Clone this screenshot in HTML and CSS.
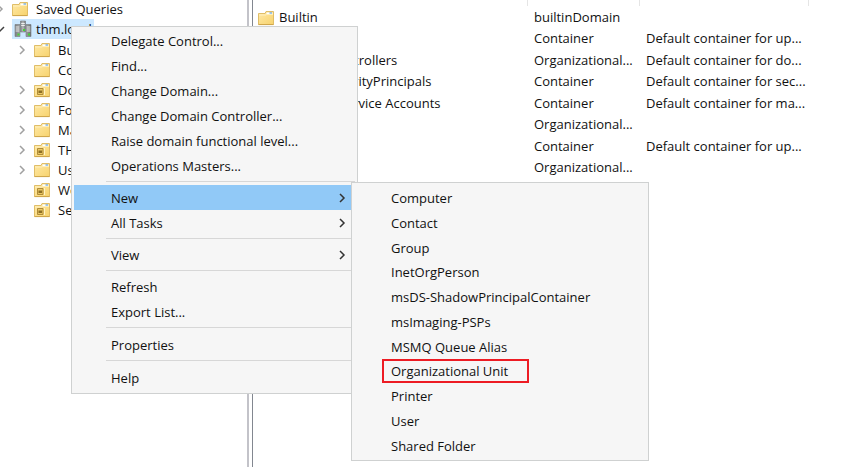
FILE: index.html
```html
<!DOCTYPE html>
<html lang="en">
<head>
  <meta charset="UTF-8">
  <meta name="viewport" content="width=device-width, initial-scale=1.0">

  <title>Active Directory Users and Computers</title>
  <link rel="stylesheet" href="styles.css">
</head>
<body>
  <!-- Shared icons -->
  <svg class="sprite" aria-hidden="true">
    <defs>
      <linearGradient id="gold" x1="0" y1="0" x2="1" y2="1">
        <stop offset="0" stop-color="#ffe9a6"/>
        <stop offset="1" stop-color="#f7d36e"/>
      </linearGradient>
      <linearGradient id="steel" x1="0" y1="0" x2="1" y2="0">
        <stop offset="0" stop-color="#7b7f82"/>
        <stop offset="0.5" stop-color="#b9bcbd"/>
        <stop offset="1" stop-color="#6b6f72"/>
      </linearGradient>
    </defs>
    <symbol id="folder" viewBox="0 0 16 16">
      <path d="M0.5 14.5V3.500h6.500l1-2h7.500v13z" fill="url(#gold)" stroke="#dcb85c" stroke-width="0.9"/>
      <path d="M8.500 2.500h6v1.500h-6z" fill="#fff"/>
      <path d="M11.500 3h2.500" stroke="#3d8fe0" stroke-width="1"/>
      <path d="M1 5h6.500l1-0.500H15" fill="none" stroke="#fff3c8" stroke-width="0.8"/>
      <path d="M0.500 14.600h15" stroke="#cda146" stroke-width="0.9"/>
    </symbol>
    <symbol id="unit" viewBox="0 0 16 16">
      <use href="#folder"/>
      <path d="M3.500 6.500h5.500v6h-5.500z" fill="#e9c765" stroke="#b08c38" stroke-width="1"/>
      <path d="M4.500 8.500h3.500v2.500h-3.500z" fill="#8d6f25"/>
      <path d="M10.500 6v7" stroke="#fff3c4" stroke-width="1"/>
    </symbol>
    <symbol id="domain" viewBox="0 0 18 18">
      <path d="M6.500 1h5v11h-5z" fill="url(#steel)" stroke="#75797c" stroke-width="0.6"/>
      <path d="M1 4.500h5v12H1zM12 4.500h5v12h-5z" fill="url(#steel)" stroke="#75797c" stroke-width="0.6"/>
      <path d="M7.200 3.500h3.600M7.200 5.500h3.600M1.700 7h3.600M1.700 9h3.600M1.700 11h3.600M12.700 7h3.600M12.700 9h3.600M12.700 11h3.600" stroke="#f4f5f5" stroke-width="0.9"/>
      <path d="M9 9h2v2H9zM3.500 13.500h2v2h-2zM14 13.500h2v2h-2z" fill="#42d832"/>
    </symbol>
    <symbol id="chevron" viewBox="0 0 8 10">
      <path d="M2 1l4 4-4 4" fill="none" stroke="currentColor" stroke-width="1.500"/>
    </symbol>
  </svg>

  <main class="console">
    <nav class="tree" aria-label="Console tree">
      <ul class="root">
        <li class="node"><svg class="arrow"><use href="#chevron"/></svg><svg class="icon"><use href="#folder"/></svg><span>Saved Queries</span></li>
        <li>
          <div class="node"><svg class="arrow open"><use href="#chevron"/></svg><span class="selected"><svg class="icon-domain"><use href="#domain"/></svg>thm.local</span></div>
          <ul class="children">
            <li class="node"><svg class="arrow"><use href="#chevron"/></svg><svg class="icon"><use href="#folder"/></svg><span>Builtin</span></li>
            <li class="node leaf"><svg class="icon"><use href="#folder"/></svg><span>Computers</span></li>
            <li class="node"><svg class="arrow"><use href="#chevron"/></svg><svg class="icon"><use href="#unit"/></svg><span>Domain Controllers</span></li>
            <li class="node"><svg class="arrow"><use href="#chevron"/></svg><svg class="icon"><use href="#folder"/></svg><span>ForeignSecurityPrincipals</span></li>
            <li class="node"><svg class="arrow"><use href="#chevron"/></svg><svg class="icon"><use href="#folder"/></svg><span>Managed Service Accounts</span></li>
            <li class="node"><svg class="arrow"><use href="#chevron"/></svg><svg class="icon"><use href="#unit"/></svg><span>THM</span></li>
            <li class="node"><svg class="arrow"><use href="#chevron"/></svg><svg class="icon"><use href="#folder"/></svg><span>Users</span></li>
            <li class="node leaf"><svg class="icon"><use href="#unit"/></svg><span>Workstations</span></li>
            <li class="node leaf"><svg class="icon"><use href="#unit"/></svg><span>Servers</span></li>
          </ul>
        </li>
      </ul>
    </nav>

    <section class="list">
      <table>
        <thead>
          <tr><th class="col-name">Name</th><th class="col-type">Type</th><th class="col-desc">Description</th><th></th></tr>
        </thead>
        <tbody>
          <tr><td><svg class="icon"><use href="#folder"/></svg>Builtin</td><td>builtinDomain</td><td></td><td></td></tr>
          <tr><td><svg class="icon"><use href="#folder"/></svg>Computers</td><td>Container</td><td>Default container for up...</td><td></td></tr>
          <tr><td><svg class="icon"><use href="#unit"/></svg>Domain Controllers</td><td>Organizational...</td><td>Default container for do...</td><td></td></tr>
          <tr><td><svg class="icon"><use href="#folder"/></svg>ForeignSecurityPrincipals</td><td>Container</td><td>Default container for sec...</td><td></td></tr>
          <tr><td><svg class="icon"><use href="#folder"/></svg>Managed Service Accounts</td><td>Container</td><td>Default container for ma...</td><td></td></tr>
          <tr><td><svg class="icon"><use href="#unit"/></svg>THM</td><td>Organizational...</td><td></td><td></td></tr>
          <tr><td><svg class="icon"><use href="#folder"/></svg>Users</td><td>Container</td><td>Default container for up...</td><td></td></tr>
          <tr><td><svg class="icon"><use href="#unit"/></svg>Servers</td><td>Organizational...</td><td></td><td></td></tr>
        </tbody>
      </table>
    </section>
  </main>

  <!-- Context menu -->
  <div class="menu context-menu" role="menu">
    <button role="menuitem">Delegate Control...</button>
    <button role="menuitem">Find...</button>
    <button role="menuitem">Change Domain...</button>
    <button role="menuitem">Change Domain Controller...</button>
    <button role="menuitem">Raise domain functional level...</button>
    <button role="menuitem">Operations Masters...</button>
    <hr>
    <button role="menuitem" class="active">New<svg class="more"><use href="#chevron"/></svg></button>
    <button role="menuitem">All Tasks<svg class="more"><use href="#chevron"/></svg></button>
    <hr>
    <button role="menuitem">View<svg class="more"><use href="#chevron"/></svg></button>
    <hr>
    <button role="menuitem">Refresh</button>
    <button role="menuitem">Export List...</button>
    <hr>
    <button role="menuitem">Properties</button>
    <hr>
    <button role="menuitem">Help</button>
  </div>

  <!-- New submenu -->
  <div class="menu submenu" role="menu">
    <button role="menuitem">Computer</button>
    <button role="menuitem">Contact</button>
    <button role="menuitem">Group</button>
    <button role="menuitem">InetOrgPerson</button>
    <button role="menuitem">msDS-ShadowPrincipalContainer</button>
    <button role="menuitem">msImaging-PSPs</button>
    <button role="menuitem">MSMQ Queue Alias</button>
    <button role="menuitem" class="marked">Organizational Unit</button>
    <button role="menuitem">Printer</button>
    <button role="menuitem">User</button>
    <button role="menuitem">Shared Folder</button>
  </div>
</body>
</html>
```
FILE: styles.css
```css
*, *::after {
  box-sizing: border-box;
}

body {
  margin: 0;
  font-family: 'Segoe UI', 'Open Sans', sans-serif;
  font-size: 13px;
  color: #111;
  background-color: white;
  overflow: hidden;
}

.sprite {
  position: absolute;
  width: 0;
  height: 0;
}

.console {
  display: flex;
  min-height: 100vh;
}

/* Tree */
.tree {
  flex: 0 0 249px;
  border-right: 2px solid #c3c3c9;
  overflow: hidden;
}

.tree ul {
  list-style: none;
  margin: 0;
  padding: 0;
}

.tree .root {
  margin: -1px 0 0 -4px;
}

.tree .children {
  padding: 1px 0 0 22px;
}

.node {
  display: flex;
  align-items: center;
  height: 20px;
  white-space: nowrap;
}

.icon {
  flex: none;
  width: 16px;
  height: 16px;
  margin-right: 8px;
}

.arrow {
  flex: none;
  width: 8px;
  height: 10px;
  margin-right: 8px;
  color: #a0a0a0;
}

.arrow.open {
  color: #404040;
  transform: rotate(90deg);
}

.leaf {
  padding-left: 16px;
}

.selected {
  display: flex;
  align-items: center;
  height: 20px;
  padding: 0 2px;
  background-color: #cce8ff;
}

.icon-domain {
  width: 18px;
  height: 18px;
  margin-right: 4px;
}

/* List */
.list {
  flex: 1;
  margin-left: 3px;
  border-left: 1px solid #828790;
  overflow: hidden;
}

table {
  width: 100%;
  margin-top: -20px;
  border-collapse: collapse;
  table-layout: fixed;
}

th {
  height: 26px;
  padding: 0 8px 4px;
  border-right: 1px solid #e5e5e5;
  font-weight: normal;
  text-align: left;
  color: #6d6d6d;
}

th:last-child {
  border: none;
}

.col-name {
  width: 274px;
}

.col-type {
  width: 112px;
}

.col-desc {
  width: 169px;
}

td {
  height: 21px;
  padding: 0 0 0 7px;
  line-height: 20px;
  white-space: nowrap;
}

tr:nth-child(even) td {
  height: 22px;
}

td:first-child {
  padding-left: 5px;
}

td .icon {
  margin-right: 5px;
  vertical-align: middle;
}

/* Menus */
.menu {
  position: absolute;
  padding: 2px;
  background-color: #f6f6f6;
  border: 1px solid #cfd1d1;
}

.menu button {
  display: flex;
  align-items: center;
  justify-content: space-between;
  width: 100%;
  height: 25px;
  padding: 0 9px 0 37px;
  border: none;
  background: none;
  font: inherit;
  color: inherit;
  text-align: left;
}

.menu button.active {
  background-color: #91c9f7;
}

.menu hr {
  height: 1px;
  margin: 3px 0 3px 32px;
  border: none;
  background-color: #d7d7d7;
}

.menu hr:nth-last-of-type(-n+2) {
  margin-bottom: 4px;
}

.more {
  width: 8px;
  height: 10px;
  color: #333;
}

.context-menu {
  left: 71px;
  top: 26px;
  width: 287px;
  padding: 1px 2px 3px;
}

.submenu {
  left: 351px;
  top: 182px;
  width: 298px;
}

.submenu button:nth-child(4n) {
  height: 24px;
}

.menu button.marked {
  position: relative;
}

.marked::after {
  content: "";
  position: absolute;
  left: 28px;
  top: 0;
  width: 147px;
  height: 24px;
  border: 2px solid #ed1c24;
}
```
